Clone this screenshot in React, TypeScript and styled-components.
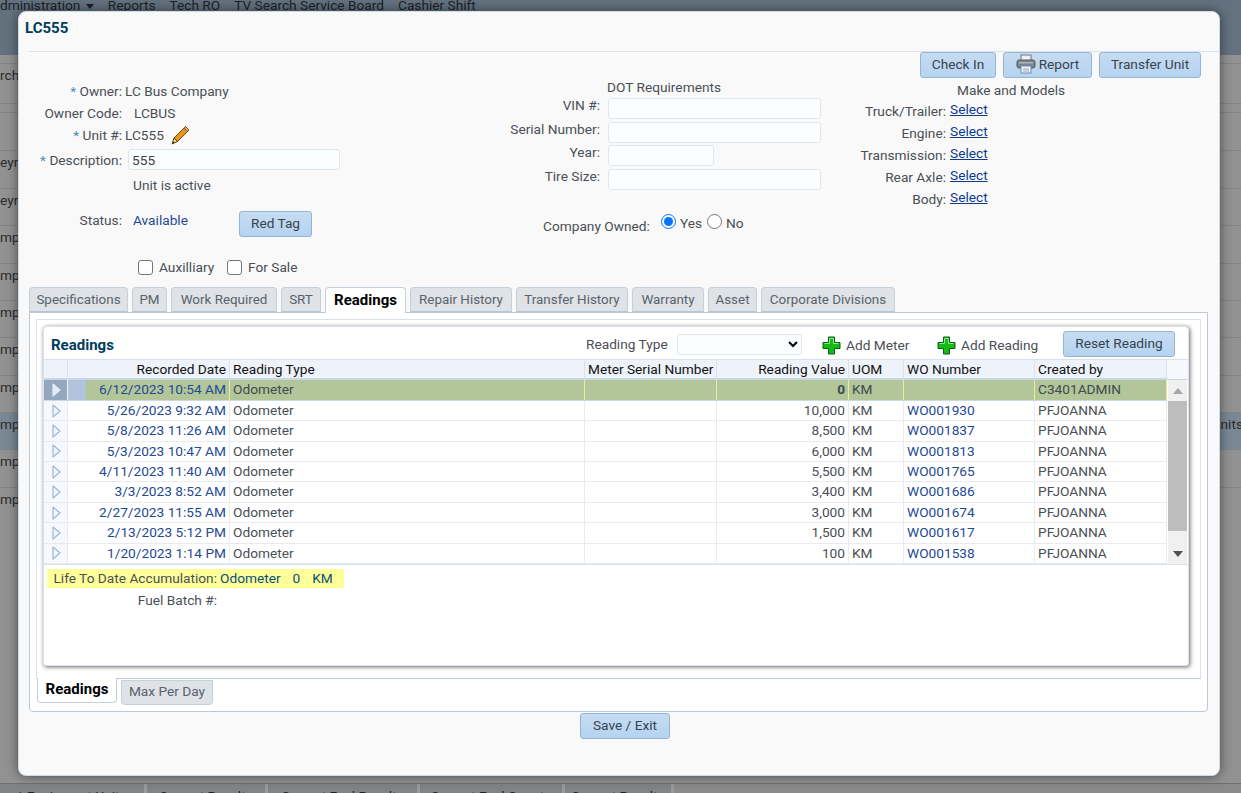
import React from "react";
import styled, { createGlobalStyle } from "styled-components";

const FONT = `Roboto, "Noto Sans", "Liberation Sans", sans-serif`;
const COLS = "24px 162px 355px 132px 132px 55px 131px 132px";

const readings = [
  { date: "5/26/2023 9:32 AM", value: "10,000", wo: "WO001930" },
  { date: "5/8/2023 11:26 AM", value: "8,500", wo: "WO001837" },
  { date: "5/3/2023 10:47 AM", value: "6,000", wo: "WO001813" },
  { date: "4/11/2023 11:40 AM", value: "5,500", wo: "WO001765" },
  { date: "3/3/2023 8:52 AM", value: "3,400", wo: "WO001686" },
  { date: "2/27/2023 11:55 AM", value: "3,000", wo: "WO001674" },
  { date: "2/13/2023 5:12 PM", value: "1,500", wo: "WO001617" },
  { date: "1/20/2023 1:14 PM", value: "100", wo: "WO001538" },
];

const tabs = [
  { label: "Specifications", w: 99 },
  { label: "PM", w: 35 },
  { label: "Work Required", w: 106 },
  { label: "SRT", w: 40 },
  { label: "Readings", w: 81 },
  { label: "Repair History", w: 102 },
  { label: "Transfer History", w: 112 },
  { label: "Warranty", w: 72 },
  { label: "Asset", w: 49 },
  { label: "Corporate Divisions", w: 134 },
];

const backRows = [
  { h: 40, text: "rch" },
  { h: 9, text: "" },
  { h: 38, text: "" },
  { h: 38, text: "eyr" },
  { h: 37, text: "eyr" },
  { h: 38, text: "mp" },
  { h: 37, text: "mp" },
  { h: 37, text: "mp" },
  { h: 38, text: "mp" },
  { h: 37, text: "mp" },
  { h: 37, text: "mp", active: true, right: "nits" },
  { h: 38, text: "mp" },
  { h: 38, text: "mp" },
];

const Arrow = ({ light }: { light?: boolean }) => (
  <svg width="9" height="14" viewBox="0 0 9 14">
    <path d="M1 1 L8 7 L1 13 Z" fill={light ? "#e3ecf6" : "#f2f6fb"} stroke={light ? "#e3ecf6" : "#9db8d6"} strokeWidth="1.2" strokeLinejoin="round" />
  </svg>
);

const Plus = () => (
  <svg width="19" height="19" viewBox="0 0 19 19">
    <path d="M6.5 1h6v5.5H18v6h-5.5V18h-6v-5.5H1v-6h5.5z" fill="#16bb16" stroke="#0b5f10" strokeWidth="1" strokeLinejoin="round" />
    <path d="M7.5 2.5h4v5h5M7.5 2.5v5h-5" fill="none" stroke="#86ee86" strokeWidth="1" />
  </svg>
);

const Printer = () => (
  <svg width="20" height="20" viewBox="0 0 20 20">
    <rect x="5" y="1" width="10" height="6" fill="#eef1f4" stroke="#6d7780" />
    <rect x="1" y="6" width="18" height="8" rx="2" fill="#7d858c" stroke="#555c63" />
    <rect x="3" y="8" width="14" height="1.5" fill="#aeb4ba" />
    <rect x="5" y="12" width="10" height="7" fill="#f4f6f8" stroke="#5d8fc4" />
    <path d="M7 15h6M7 17h6" stroke="#9aa2a9" />
  </svg>
);

const Pencil = () => (
  <svg width="19" height="20" viewBox="0 0 19 20">
    <path d="M14.5 1.5 L18 5 L6.5 16.5 L3 13 Z" fill="#e8961e" stroke="#7a4a08" strokeWidth="1" />
    <path d="M14.5 1.5 L18 5 L16.4 6.6 L12.9 3.1 Z" fill="#d9b48a" stroke="#7a4a08" strokeWidth="1" />
    <path d="M3 13 L6.5 16.5 L1.2 18.8 Z" fill="#f0d9a8" stroke="#5b3a08" strokeWidth="1" />
    <path d="M1.2 18.8 L2.2 16.4 L3.6 17.8 Z" fill="#222" />
  </svg>
);

export default function App() {
  return (
    <Page>
      <GlobalStyle />
      <NavBar>
        <NavItem>Administration <Caret /></NavItem>
        <NavItem>Reports</NavItem>
        <NavItem>Tech RO</NavItem>
        <NavItem>TV Search Service Board</NavItem>
        <NavItem>Cashier Shift</NavItem>
      </NavBar>
      <BackRows>
        {backRows.map((r, i) => (
          <BackRow key={i} $h={r.h} $active={r.active}>
            <span>{r.text}</span>
            {r.right && <BackRight>{r.right}</BackRight>}
          </BackRow>
        ))}
      </BackRows>
      <BackTabs>
        <BackTab $w={147}>* Equipment Units</BackTab>
        <BackTab $w={121}>Current Results</BackTab>
        <BackTab $w={152}>Current Fuel Results</BackTab>
        <BackTab $w={145}>Current Fuel Counts</BackTab>
        <BackTab $w={109}>Current Results</BackTab>
      </BackTabs>

      <Modal>
        <ModalTitle>LC555</ModalTitle>
        <TopActions>
          <Button $w={76}>Check In</Button>
          <Button $w={89}>
            <Printer /> Report
          </Button>
          <Button $w={102}>Transfer Unit</Button>
        </TopActions>

        <FormArea>
          <LeftCol>
            <Row $h={21}>
              <Label><Star>*</Star> Owner:</Label>
              <Value>LC Bus Company</Value>
            </Row>
            <Row $h={23}>
              <Label>Owner Code:</Label>
              <Value $pad={9}>LCBUS</Value>
            </Row>
            <Row $h={22}>
              <Label><Star>*</Star> Unit #:</Label>
              <Value>LC555</Value>
              <PencilWrap><Pencil /></PencilWrap>
            </Row>
            <Row $h={27}>
              <Label><Star>*</Star> Description:</Label>
              <DescInput defaultValue="555" />
            </Row>
            <Row $h={24}>
              <Label />
              <Value $pad={8}>Unit is active</Value>
            </Row>
            <StatusRow>
              <StatusLabel>Status:</StatusLabel>
              <StatusValue>Available</StatusValue>
              <Button $w={73}>Red Tag</Button>
            </StatusRow>
            <ChecksRow>
              <CheckLabel $w={89}><Box type="checkbox" readOnly /> Auxilliary</CheckLabel>
              <CheckLabel $w={80}><Box type="checkbox" readOnly /> For Sale</CheckLabel>
            </ChecksRow>
          </LeftCol>

          <MiddleCol>
            <DotTitle>DOT Requirements</DotTitle>
            <DotRow>
              <DotLabel>VIN #:</DotLabel>
              <DotInput />
            </DotRow>
            <DotRow>
              <DotLabel>Serial Number:</DotLabel>
              <DotInput />
            </DotRow>
            <DotRow>
              <DotLabel>Year:</DotLabel>
              <DotInput $short />
            </DotRow>
            <DotRow>
              <DotLabel>Tire Size:</DotLabel>
              <DotInput />
            </DotRow>
            <OwnedRow>
              <OwnedLabel>Company Owned:</OwnedLabel>
              <Radio type="radio" name="owned" defaultChecked />
              <RadioText>Yes</RadioText>
              <Radio type="radio" name="owned" />
              <RadioText>No</RadioText>
            </OwnedRow>
          </MiddleCol>

          <RightCol>
            <MakeTitle>Make and Models</MakeTitle>
            {["Truck/Trailer", "Engine", "Transmission", "Rear Axle", "Body"].map((m) => (
              <MakeRow key={m}>
                <MakeLabel>{m}:</MakeLabel>
                <SelectLink>Select</SelectLink>
              </MakeRow>
            ))}
          </RightCol>
        </FormArea>

        <TabBar>
          {tabs.map((t) => (
            <Tab key={t.label} $w={t.w} $active={t.label === "Readings"}>{t.label}</Tab>
          ))}
        </TabBar>
        <TabPanel>
          <InnerPanel>
            <Card>
              <CardHead>
                <CardTitle>Readings</CardTitle>
                <TypeLabel>Reading Type</TypeLabel>
                <TypeSelect />
                <AddLink $w={115}><Plus /> Add Meter</AddLink>
                <AddLink $w={126}><Plus /> Add Reading</AddLink>
                <Button $w={112}>Reset Reading</Button>
              </CardHead>
              <HeadRow>
                <HeadCell />
                <HeadCell $right>Recorded Date</HeadCell>
                <HeadCell>Reading Type</HeadCell>
                <HeadCell>Meter Serial Number</HeadCell>
                <HeadCell $right>Reading Value</HeadCell>
                <HeadCell>UOM</HeadCell>
                <HeadCell>WO Number</HeadCell>
                <HeadCell>Created by</HeadCell>
                <HeadFill />
              </HeadRow>
              <GridBody>
                <Rows>
                  <SelectedRow>
                    <ExpanderSel><Arrow light /></ExpanderSel>
                    <DateSel $right>6/12/2023 10:54 AM</DateSel>
                    <SelCell>Odometer</SelCell>
                    <SelCell />
                    <SelCell $right><strong>0</strong></SelCell>
                    <SelCell>KM</SelCell>
                    <SelCell />
                    <SelCell>C3401ADMIN</SelCell>
                  </SelectedRow>
                  {readings.map((r) => (
                    <DataRow key={r.wo}>
                      <Expander><Arrow /></Expander>
                      <Cell $right $link>{r.date}</Cell>
                      <Cell>Odometer</Cell>
                      <Cell />
                      <Cell $right>{r.value}</Cell>
                      <Cell>KM</Cell>
                      <Cell $link>{r.wo}</Cell>
                      <Cell>PFJOANNA</Cell>
                    </DataRow>
                  ))}
                </Rows>
                <Scrollbar>
                  <ScrollBtn><UpTriangle /></ScrollBtn>
                  <ScrollThumb />
                  <ScrollBtn><DownTriangle /></ScrollBtn>
                </Scrollbar>
              </GridBody>
              <LifeStrip>
                <FootLabel>Life To Date Accumulation:</FootLabel>
                <LifeValue>Odometer</LifeValue>
                <LifeValue>0</LifeValue>
                <LifeValue>KM</LifeValue>
              </LifeStrip>
              <FuelRow>
                <FootLabel>Fuel Batch #:</FootLabel>
              </FuelRow>
            </Card>
          </InnerPanel>
          <SubTabs>
            <SubTab $w={80} $active>Readings</SubTab>
            <SubTab $w={92}>Max Per Day</SubTab>
          </SubTabs>
        </TabPanel>
        <ModalFoot>
          <Button $w={90}>Save / Exit</Button>
        </ModalFoot>
      </Modal>
    </Page>
  );
}

const GlobalStyle = createGlobalStyle`
  html, body { margin: 0; padding: 0; height: 100%; overflow: hidden; }
  body { font-family: ${FONT}; font-size: 13.7px; color: #4a4f55; background: #929292; }
  * { box-sizing: border-box; }
`;

const Page = styled.div`
  position: relative;
  width: 1241px;
  height: 793px;
  overflow: hidden;
  background: #929292;
  display: flex;
  flex-direction: column;
`;

const NavBar = styled.div`
  height: 55px;
  flex: none;
  background: #64727f;
  display: flex;
  gap: 14px;
  margin-left: -9px;
  color: #1c2127;
  line-height: 10px;
`;

const NavItem = styled.span`
  white-space: nowrap;
`;

const Caret = styled.i`
  display: inline-block;
  margin-left: 2px;
  vertical-align: middle;
  border: 4.5px solid transparent;
  border-bottom: none;
  border-top: 5px solid #1c2127;
`;

const BackRows = styled.div`
  flex: 1;
  padding-top: 8px;
`;

const BackRow = styled.div<{ $h: number; $active?: boolean }>`
  height: ${(p) => p.$h}px;
  border-top: 1px solid #848484;
  background: ${(p) => (p.$active ? "#7a8896" : "transparent")};
  color: #2b2b2b;
  display: flex;
  justify-content: space-between;
  line-height: 20px;
  padding-top: 1px;
  overflow: hidden;
`;

const BackRight = styled.span`
  margin-right: -2px;
`;

const BackTabs = styled.div`
  height: 10px;
  flex: none;
  display: flex;
  overflow: hidden;
  background: #8a8a8a;
  border-top: 1px solid #707070;
`;

const BackTab = styled.div<{ $w: number }>`
  width: ${(p) => p.$w}px;
  flex: none;
  background: #808487;
  border-right: 3px solid #9a9a9a;
  color: #222;
  text-align: center;
  line-height: 24px;
  white-space: nowrap;
`;

const Modal = styled.div`
  position: absolute;
  left: 18px;
  top: 11px;
  width: 1202px;
  height: 765px;
  background: #f9f9f9;
  border: 1px solid #cfdbe6;
  border-radius: 8px;
  box-shadow: 0 0 12px rgba(0, 0, 0, 0.5);
  padding: 0 10px;
  display: flex;
  flex-direction: column;
`;

const ModalTitle = styled.div`
  height: 40px;
  margin: 0 -4px;
  padding-top: 6px;
  font-weight: 700;
  font-size: 15px;
  color: #003d5b;
  line-height: 20px;
`;

const TopActions = styled.div`
  position: absolute;
  top: 39px;
  left: 10px;
  right: 0;
  border-top: 1px solid #d9e2ea;
  display: flex;
  justify-content: flex-end;
  gap: 7px;
  padding-right: 18px;
`;

const Button = styled.button<{ $w: number }>`
  width: ${(p) => p.$w}px;
  height: 26px;
  padding: 0 0 2px;
  border: 1px solid #95b5d6;
  border-radius: 3px;
  background: linear-gradient(#c6dcf2, #b5d3f0);
  color: #39434c;
  font: 13.7px ${FONT};
  display: inline-flex;
  align-items: center;
  justify-content: center;
  gap: 3px;
  white-space: nowrap;
  flex: none;
`;

const FormArea = styled.div`
  height: 235px;
  display: flex;
  align-items: flex-start;
`;

const LeftCol = styled.div`
  width: 480px;
  padding-top: 28px;
  flex: none;
`;

const Row = styled.div<{ $h: number }>`
  height: ${(p) => p.$h}px;
  display: flex;
  align-items: center;
`;

const Label = styled.div`
  width: 93px;
  flex: none;
  text-align: right;
  white-space: nowrap;
  line-height: 20px;
`;

const Star = styled.span`
  color: #4d8fb8;
`;

const Value = styled.div<{ $pad?: number }>`
  padding-left: ${(p) => 3 + (p.$pad ?? 0)}px;
  white-space: nowrap;
`;

const PencilWrap = styled.span`
  display: inline-flex;
  margin-left: 7px;
`;

const DescInput = styled.input`
  width: 212px;
  height: 21px;
  margin-left: 6px;
  padding: 0 3px;
  border: 1px solid #dfe7ee;
  border-radius: 3px;
  background: #fbfdfe;
  color: #3a3f45;
  font: 13.7px ${FONT};
`;

const StatusRow = styled.div`
  display: flex;
  align-items: center;
  height: 26px;
  margin-top: 14px;
`;

const StatusLabel = styled(Label)`
  margin-top: -8px;
`;

const StatusValue = styled.span`
  color: #1f4a94;
  width: 117px;
  padding-left: 11px;
  flex: none;
  margin-top: -8px;
`;

const ChecksRow = styled.div`
  display: flex;
  padding-left: 109px;
  margin-top: 20px;
  height: 20px;
  align-items: center;
`;

const CheckLabel = styled.label<{ $w: number }>`
  width: ${(p) => p.$w}px;
  flex: none;
  display: flex;
  align-items: center;
  gap: 6px;
`;

const Box = styled.input`
  appearance: none;
  width: 15px;
  height: 15px;
  margin: 0;
  border: 1px solid #767676;
  border-radius: 3px;
  background: #fff;
`;

const MiddleCol = styled.div`
  width: 320px;
  flex: none;
  padding-top: 26px;
`;

const DotTitle = styled.div`
  padding-left: 98px;
  height: 20px;
  line-height: 18px;
`;

const DotRow = styled.div`
  display: flex;
  height: 23.7px;
  align-items: flex-start;
`;

const DotLabel = styled.div`
  width: 91px;
  margin-top: -2px;
  text-align: right;
  white-space: nowrap;
  flex: none;
  line-height: 19px;
`;

const DotInput = styled.input<{ $short?: boolean }>`
  width: ${(p) => (p.$short ? 106 : 213)}px;
  height: 21px;
  margin-left: 8px;
  border: 1px solid #dfe7ee;
  border-radius: 3px;
  background: #fbfdfe;
`;

const OwnedRow = styled.div`
  display: flex;
  align-items: center;
  margin-top: 17px;
  padding-left: 34px;
`;

const OwnedLabel = styled.div`
  width: 118px;
  padding-top: 8px;
  flex: none;
  white-space: nowrap;
`;

const Radio = styled.input`
  width: 15px;
  height: 15px;
  margin: 0 4px 0 0;
  accent-color: #0075ff;
`;

const RadioText = styled.span`
  width: 27px;
  padding-top: 3px;
`;

const RightCol = styled.div`
  flex: 1;
  padding-top: 29px;
`;

const MakeTitle = styled.div`
  padding-left: 128px;
  height: 19px;
  line-height: 19px;
  white-space: nowrap;
`;

const MakeRow = styled.div`
  display: flex;
  height: 22px;
  line-height: 18px;
`;

const MakeLabel = styled.div`
  width: 117px;
  padding-top: 2px;
  text-align: right;
  white-space: nowrap;
  flex: none;
`;

const SelectLink = styled.a`
  margin-left: 4px;
  color: #0b3a8f;
  text-decoration: underline;
`;

const TabBar = styled.div`
  display: flex;
  gap: 4px;
  height: 26px;
  position: relative;
  z-index: 1;
`;

const Tab = styled.div<{ $w: number; $active?: boolean }>`
  width: ${(p) => p.$w}px;
  flex: none;
  text-align: center;
  height: ${(p) => (p.$active ? 26 : 25)}px;
  line-height: 24px;
  border: 1px solid #c5d0da;
  border-bottom: ${(p) => (p.$active ? "none" : "1px solid #b9c6d3")};
  border-radius: 4px 4px 0 0;
  background: ${(p) => (p.$active ? "#fff" : "#dfe3e7")};
  color: ${(p) => (p.$active ? "#000" : "#59626b")};
  font-weight: ${(p) => (p.$active ? 700 : 400)};
  font-size: ${(p) => (p.$active ? 15 : 13.4)}px;
  white-space: nowrap;
`;

const TabPanel = styled.div`
  height: 400px;
  margin-top: -1px;
  margin-right: 1px;
  padding: 6px 6px 0;
  border: 1px solid #bcc8d4;
  border-radius: 0 0 4px 4px;
  background: #fff;
`;

const InnerPanel = styled.div`
  height: 360px;
  padding: 6px;
  border: 1px solid #d9e2ea;
  border-bottom-color: #bcc8d4;
`;

const Card = styled.div`
  height: 340px;
  width: 1146px;
  border: 1px solid #d9e2ea;
  border-radius: 4px 4px 3px 3px;
  background: #fff;
  box-shadow: 1px 1px 4px rgba(0, 0, 0, 0.6);
`;

const CardHead = styled.div`
  height: 32px;
  display: flex;
  align-items: center;
  padding: 2px 13px 0 7px;
`;

const CardTitle = styled.div`
  width: 535px;
  padding-top: 1px;
  font-weight: 700;
  font-size: 15px;
  color: #003d5b;
  flex: none;
`;

const TypeLabel = styled.div`
  width: 91px;
  flex: none;
  white-space: nowrap;
`;

const TypeSelect = styled.select`
  width: 125px;
  height: 21px;
  flex: none;
  border: 1px solid #dfe7ee;
  border-radius: 3px;
  background: #fbfdfe;
  margin-right: 20px;
`;

const AddLink = styled.div<{ $w: number }>`
  width: ${(p) => p.$w}px;
  flex: none;
  display: flex;
  align-items: center;
  gap: 5px;
  white-space: nowrap;
  padding-top: 2px;
`;

const HeadRow = styled.div`
  display: grid;
  grid-template-columns: ${COLS} 1fr;
  height: 21px;
  background: #eef2fa;
  border-top: 1px solid #d9e2ea;
  border-bottom: 2px solid #c9d6e6;
`;

const HeadCell = styled.div<{ $right?: boolean }>`
  padding: 0 3px;
  line-height: 19px;
  color: #111;
  text-align: ${(p) => (p.$right ? "right" : "left")};
  border-right: 1px solid #d9e2ea;
  white-space: nowrap;
`;

const HeadFill = styled.div`
  background: #f7f8fc;
`;

const GridBody = styled.div`
  display: flex;
  height: 185px;
  border-bottom: 1px solid #d9e2ea;
`;

const Rows = styled.div`
  display: flex;
  flex-direction: column;
  width: 1123px;
  flex: none;
`;

const DataRow = styled.div`
  display: grid;
  grid-template-columns: ${COLS};
  height: 20.4px;
  border-bottom: 1px solid #e8ecf0;
`;

const SelectedRow = styled(DataRow)`
  height: 21px;
  border-bottom: 1px solid #cbd8e8;
  background: #b3c699;
`;

const Cell = styled.div<{ $right?: boolean; $link?: boolean }>`
  padding: 0 3px;
  line-height: 18px;
  text-align: ${(p) => (p.$right ? "right" : "left")};
  color: ${(p) => (p.$link ? "#1f4a94" : "#4a4f55")};
  border-right: 1px solid #e8ecf0;
  white-space: nowrap;
  overflow: hidden;
`;

const SelCell = styled(Cell)`
  color: #3e4a52;
  border-right: 1px solid #e7ee9e;
`;

const DateSel = styled(SelCell)`
  color: #1f4a94;
  background: linear-gradient(to right, #b0c4de 18px, #b3c699 18px);
`;

const Expander = styled.div`
  background: #f5f8fc;
  border-right: 1px solid #e8ecf0;
  display: flex;
  align-items: center;
  padding-left: 8px;
`;

const ExpanderSel = styled(Expander)`
  background: #93a7bf;
  border-right: 1px solid #f0f4f8;
`;

const Scrollbar = styled.div`
  width: 19px;
  margin-left: 1px;
  background: #f0f0f0;
  display: flex;
  flex-direction: column;
`;

const ScrollBtn = styled.div`
  height: 21px;
  display: flex;
  align-items: center;
  justify-content: center;
`;

const UpTriangle = styled.div`
  border: 5px solid transparent;
  border-top: none;
  border-bottom: 6px solid #a5a5a5;
`;

const DownTriangle = styled.div`
  border: 5px solid transparent;
  border-bottom: none;
  border-top: 6px solid #505050;
`;

const ScrollThumb = styled.div`
  flex: 1;
  margin-bottom: 12px;
  background: #bdbdbd;
`;

const LifeStrip = styled.div`
  width: 297px;
  height: 19px;
  margin: 4px 0 0 3px;
  display: flex;
  background: #ffff99;
  line-height: 19px;
`;

const FootLabel = styled.div`
  width: 170px;
  flex: none;
  text-align: right;
  white-space: nowrap;
`;

const LifeValue = styled.span`
  color: #0b4f7a;
  margin-left: 3px;
  padding-right: 9px;
  white-space: nowrap;
`;

const FuelRow = styled.div`
  margin: 3px 0 0 3px;
  line-height: 19px;
`;

const SubTabs = styled.div`
  display: flex;
  gap: 4px;
  padding-left: 1px;
`;

const SubTab = styled.div<{ $w: number; $active?: boolean }>`
  width: ${(p) => p.$w}px;
  height: 25px;
  text-align: center;
  line-height: ${(p) => (p.$active ? 23 : 21)}px;
  margin-top: ${(p) => (p.$active ? -1 : 1)}px;
  border: 1px solid #c5d0da;
  border-top: ${(p) => (p.$active ? "none" : "1px solid #c5d0da")};
  border-radius: 0 0 4px 4px;
  background: ${(p) => (p.$active ? "#fff" : "#dfe3e7")};
  color: ${(p) => (p.$active ? "#000" : "#59626b")};
  font-weight: ${(p) => (p.$active ? 700 : 400)};
  font-size: ${(p) => (p.$active ? 15 : 13.7)}px;
`;

const ModalFoot = styled.div`
  display: flex;
  justify-content: center;
  padding: 1px 0 0 12px;
`;
